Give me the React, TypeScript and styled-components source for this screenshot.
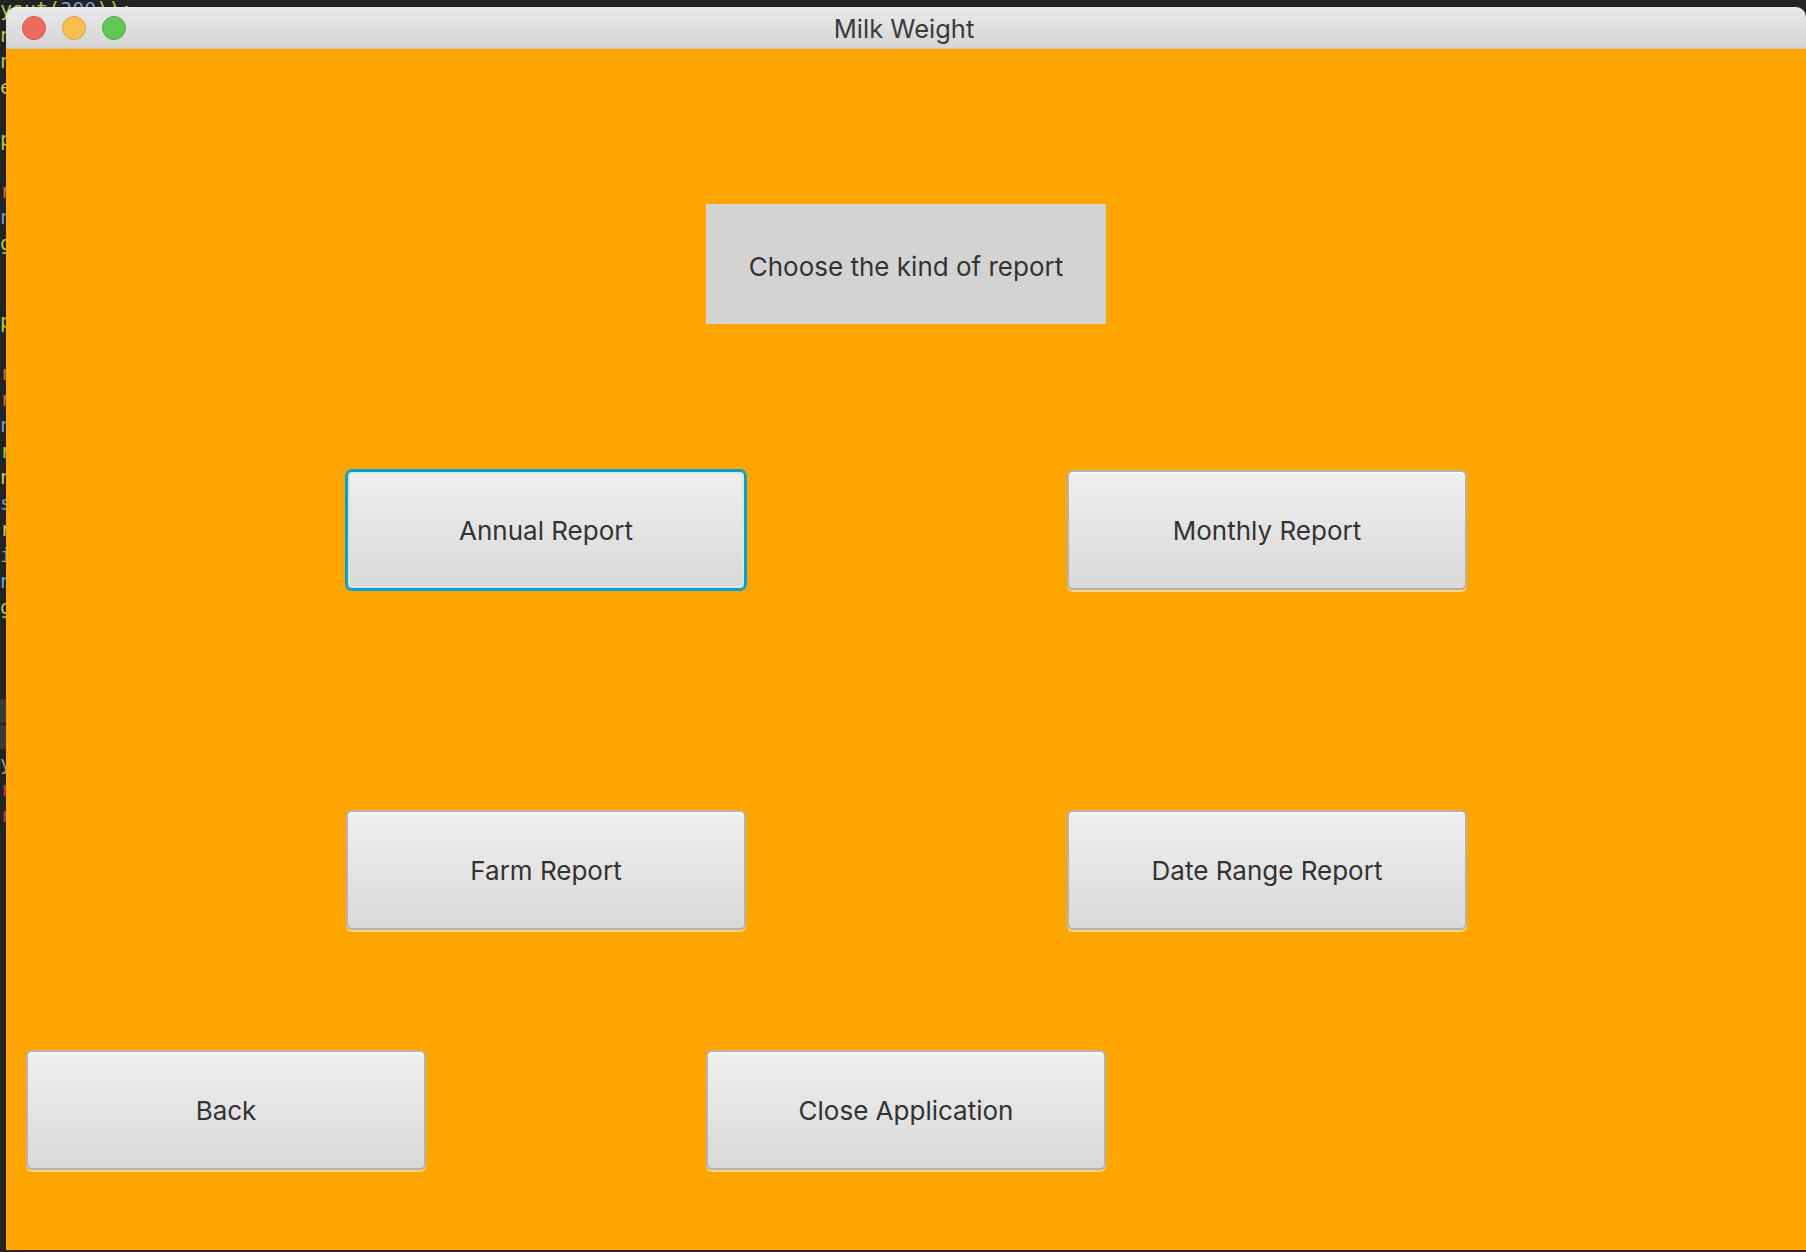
import { createGlobalStyle, styled } from 'styled-components';

const GlobalStyle = createGlobalStyle`
  html, body {
    margin: 0;
    padding: 0;
    background: #232323;
    overflow: hidden;
  }
`;

const Desktop = styled.div`
  position: relative;
  width: 1806px;
  height: 1252px;
  overflow: hidden;
  background: #232323;
`;

// editor behind the window, only a sliver of it shows at the left and top
const Editor = styled.pre`
  position: absolute;
  top: -4px;
  left: 0;
  margin: 0;
  font-family: "DejaVu Sans Mono", "Liberation Mono", monospace;
  font-size: 20px;
  line-height: 26px;
  color: #d4d4d4;
`;

const Tok = styled.span<{ $c: string }>`
  color: ${p => p.$c};
`;

const Window = styled.div`
  position: absolute;
  top: 7px;
  left: 6px;
  right: 0;
  bottom: 2px;
  display: flex;
  flex-direction: column;
  border-radius: 10px 10px 0 0;
  overflow: hidden;
`;

const TitleBar = styled.div`
  height: 41px;
  flex: none;
  display: grid;
  grid-template-columns: 1fr auto 1fr;
  align-items: center;
  background: linear-gradient(#ebeaeb, #d6d5d6);
  border-bottom: 1px solid #c4c4c4;
`;

const Lights = styled.div`
  display: flex;
  gap: 16px;
  padding-left: 16px;
`;

const Light = styled.span<{ $fill: string; $edge: string }>`
  width: 24px;
  height: 24px;
  border-radius: 50%;
  box-sizing: border-box;
  background: ${p => p.$fill};
  border: 1px solid ${p => p.$edge};
`;

const Title = styled.div`
  font-family: Inter, "Liberation Sans", sans-serif;
  font-size: 25.5px;
  color: #3b3b3b;
  margin-left: -4px;
  padding-top: 2px;
`;

const Content = styled.div`
  flex: 1;
  background: #ffa500;
  display: flex;
  flex-direction: column;
  padding-top: 155px;
`;

const Row = styled.div<{ $left: number; $gap: number; $top: number }>`
  display: flex;
  padding-left: ${p => p.$left}px;
  gap: ${p => p.$gap}px;
  margin-top: ${p => p.$top}px;
`;

const Heading = styled.div`
  width: 400px;
  height: 120px;
  box-sizing: border-box;
  padding-top: 5px;
  display: flex;
  align-items: center;
  justify-content: center;
  background: #d3d3d3;
  font-family: Inter, "Liberation Sans", sans-serif;
  font-size: 26px;
  color: #333;
`;

const Button = styled.button<{ $focused?: boolean }>`
  width: 400px;
  height: 120px;
  box-sizing: border-box;
  padding: 0;
  border-radius: 6px;
  border: 2px solid ${p => (p.$focused ? '#0a9fd4' : '#b3b3b3')};
  background: linear-gradient(#efefef, #d9d9d9);
  box-shadow: ${p =>
    p.$focused
      ? 'inset 0 0 0 2px #cfe8f2, 0 0 0 1px #0a9fd4'
      : 'inset 0 2px 0 #fafafa, 0 2px 0 rgba(255, 255, 255, 0.5)'};
  font-family: Inter, "Liberation Sans", sans-serif;
  font-size: 26px;
  color: #333;
  cursor: pointer;
`;

const code: [string, string][][] = [
  [['#a6c94a', 'yout('], ['#6a9fd0', '300'], ['#a6c94a', '));']],
  [['#a6c94a', 'n']],
  [['#a6c94a', 'n']],
  [['#c8c86a', 'e']],
  [['#d4d4d4', ' ']],
  [['#a6c94a', 'p']],
  [['#d4d4d4', ' ']],
  [['#c0703a', 'r']],
  [['#6a9fd0', 'n']],
  [['#a6c94a', 'g']],
  [['#d4d4d4', ' ']],
  [['#d4d4d4', ' ']],
  [['#a6c94a', 'p']],
  [['#d4d4d4', ' ']],
  [['#c0703a', 'r']],
  [['#c0703a', 'r']],
  [['#6a9fd0', 'n']],
  [['#a6c94a', 'r']],
  [['#c8c86a', 'n']],
  [['#6a9fd0', 's']],
  [['#c8c86a', 'r']],
  [['#9a9a9a', 'i']],
  [['#6a9fd0', 'n']],
  [['#a6c94a', 'g']],
  [['#d4d4d4', ' ']],
  [['#d4d4d4', ' ']],
  [['#d4d4d4', ' ']],
  [['#3a3a3a', '█']],
  [['#3a3a3a', '█']],
  [['#9a9a9a', 'y']],
  [['#c04040', 'r']],
  [['#c04040', 'r']],
];

function App() {
  return (
    <Desktop>
      <GlobalStyle />
      <Editor>
        {code.map((line, i) => (
          <div key={i}>
            {line.map(([c, t], j) => (
              <Tok key={j} $c={c}>{t}</Tok>
            ))}
          </div>
        ))}
      </Editor>
      <Window>
        <TitleBar>
          <Lights>
            <Light $fill="#ee6a5f" $edge="#d5584e" />
            <Light $fill="#f6bf4f" $edge="#dca23c" />
            <Light $fill="#62c655" $edge="#4fae43" />
          </Lights>
          <Title>Milk Weight</Title>
          <div />
        </TitleBar>
        <Content>
          <Row $left={700} $gap={0} $top={0}>
            <Heading>Choose the kind of report</Heading>
          </Row>
          <Row $left={340} $gap={321} $top={146}>
            <Button $focused>Annual Report</Button>
            <Button>Monthly Report</Button>
          </Row>
          <Row $left={340} $gap={321} $top={220}>
            <Button>Farm Report</Button>
            <Button>Date Range Report</Button>
          </Row>
          <Row $left={20} $gap={280} $top={120}>
            <Button>Back</Button>
            <Button>Close Application</Button>
          </Row>
        </Content>
      </Window>
    </Desktop>
  );
}

export default App;
